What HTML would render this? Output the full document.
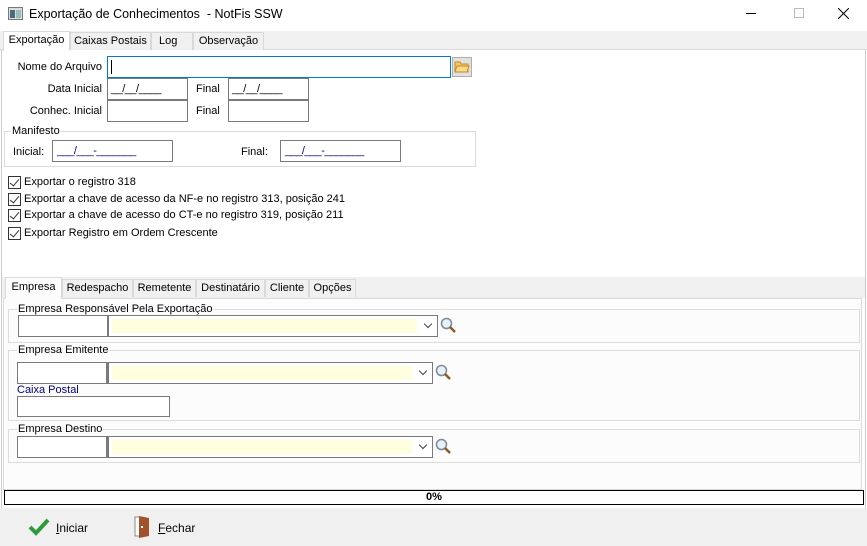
<!DOCTYPE html><html><head><meta charset="utf-8"><style>
*{margin:0;padding:0;box-sizing:border-box}
body{width:867px;height:546px;background:#fff;font:11px "Liberation Sans",sans-serif;color:#000;position:relative;overflow:hidden;white-space:nowrap}
.a{position:absolute}
.r{position:absolute;text-align:right}
.in{position:absolute;border:1px solid #7a7a7a;background:#fff}
.tab{position:absolute;height:18px;border:1px solid #d9d9d9;border-bottom:none;background:#f0f0f0;text-align:center;line-height:17px}
.grp{position:absolute;border:1px solid #dcdcdc}
.lg{position:absolute;background:#fcfcfc;padding:0 1px;top:-8px;left:6px;line-height:14px}
.cb{position:absolute;left:8px;width:13px;height:13px;border:1px solid #333;background:#fff}
.cb:after{content:"";position:absolute;left:3px;top:0px;width:4px;height:8px;border:solid #333;border-width:0 1.5px 1.5px 0;transform:rotate(40deg)}
.ct{position:absolute;left:24px}
.mask{color:#000080;position:absolute;left:4px;top:4px;letter-spacing:-0.5px}
.dm{position:absolute;left:3px;top:4px;letter-spacing:-0.5px}
.combo{position:absolute;border:1px solid #7a7a7a;border-left:2px solid #7a7a7a;background:#fff}
.combo i{position:absolute;left:3px;top:3px;bottom:3px;right:20px;background:#ffffe0}
.combo b{position:absolute;right:6px;top:5px;width:6px;height:6px;border:solid #444;border-width:0 1px 1px 0;transform:rotate(45deg)}
</style></head><body>
<div class="a" style="left:0;top:0;width:867px;height:30px;background:#fff"></div>
<svg class="a" style="left:8px;top:7px" width="15" height="13"><rect x="0.5" y="0.5" width="14" height="12" fill="#ddd" stroke="#777"/><rect x="2" y="3" width="5" height="8" fill="#4a6b7c"/><rect x="8" y="3" width="5" height="8" fill="#9bb"/></svg>
<div class="a" style="left:29px;top:7px;font-size:12.5px">Exportação de Conhecimentos&nbsp; - NotFis SSW</div>
<div class="a" style="left:746px;top:13px;width:10px;height:1px;background:#000"></div>
<div class="a" style="left:794px;top:8px;width:10px;height:10px;border:1px solid #bbb"></div>
<svg class="a" style="left:838px;top:8px" width="11" height="11"><path d="M0 0L11 11M11 0L0 11" stroke="#000" stroke-width="1"/></svg>
<div class="a" style="left:0;top:31px;width:867px;height:19px;background:#f0f0f0;border-bottom:1px solid #d9d9d9"></div>
<div class="a" style="left:1px;top:50px;width:1px;height:460px;background:#ccc"></div>
<div class="a" style="left:865px;top:50px;width:1px;height:460px;background:#ccc"></div>
<div class="tab" style="left:3px;top:31px;width:67px;height:20px;background:#fff;line-height:17px">Exportação</div>
<div class="tab" style="left:70px;top:32px;width:81px">Caixas Postais</div>
<div class="tab" style="left:151px;top:32px;width:42px;text-align:left;padding-left:7px">Log</div>
<div class="tab" style="left:193px;top:32px;width:71px">Observação</div>
<div class="r" style="left:0;width:102px;top:61px">Nome do Arquivo</div>
<div class="in" style="left:107px;top:56px;width:344px;height:22px;border-color:#0078d7"><div class="a" style="left:3px;top:3px;width:1px;height:14px;background:#000"></div></div>
<div class="a" style="left:452px;top:57px;width:20px;height:20px;background:#e1e1e1;border:1px solid #adadad"></div>
<svg class="a" style="left:454px;top:61px" width="16" height="12"><path d="M1 1h5l1 2h7v8H1z" fill="#f7c866" stroke="#c48a22"/><path d="M3 5h12l-2 6H1z" fill="#fbd98a" stroke="#c48a22"/></svg>
<div class="r" style="left:0;width:102px;top:83px">Data Inicial</div>
<div class="in" style="left:107px;top:78px;width:81px;height:22px"><span class="dm">__/__/____</span></div>
<div class="a" style="left:196px;top:83px">Final</div>
<div class="in" style="left:228px;top:78px;width:81px;height:22px"><span class="dm">__/__/____</span></div>
<div class="r" style="left:0;width:102px;top:105px">Conhec. Inicial</div>
<div class="in" style="left:107px;top:100px;width:81px;height:22px"></div>
<div class="a" style="left:196px;top:105px">Final</div>
<div class="in" style="left:228px;top:100px;width:81px;height:22px"></div>
<div class="grp" style="left:4px;top:131px;width:472px;height:36px"><span class="lg" style="background:#fff;left:6px">Manifesto</span></div>
<div class="a" style="left:13px;top:146px">Inicial:</div>
<div class="in" style="left:52px;top:140px;width:121px;height:22px"><span class="mask">___/___-_______</span></div>
<div class="a" style="left:241px;top:146px">Final:</div>
<div class="in" style="left:280px;top:140px;width:121px;height:22px"><span class="mask">___/___-_______</span></div>
<div class="cb" style="top:176px"></div><div class="ct" style="top:176px">Exportar o registro 318</div>
<div class="cb" style="top:193px"></div><div class="ct" style="top:193px">Exportar a chave de acesso da NF-e no registro 313, posição 241</div>
<div class="cb" style="top:209px"></div><div class="ct" style="top:209px">Exportar a chave de acesso do CT-e no registro 319, posição 211</div>
<div class="cb" style="top:227px"></div><div class="ct" style="top:227px">Exportar Registro em Ordem Crescente</div>
<div class="a" style="left:2px;top:277px;width:863px;height:21px;background:#f0f0f0"></div>
<div class="a" style="left:3px;top:298px;width:859px;height:192px;background:#fcfcfc;border:1px solid #dadada"></div>
<div class="tab" style="left:5px;top:277px;width:57px;height:22px;background:#fcfcfc;line-height:18px">Empresa</div>
<div class="tab" style="left:62px;top:279px;width:71px">Redespacho</div>
<div class="tab" style="left:133px;top:279px;width:63px">Remetente</div>
<div class="tab" style="left:196px;top:279px;width:69px">Destinatário</div>
<div class="tab" style="left:265px;top:279px;width:44px">Cliente</div>
<div class="tab" style="left:309px;top:279px;width:47px">Opções</div>
<div class="grp" style="left:8px;top:309px;width:852px;height:34px"><span class="lg" style="left:8px">Empresa Responsável Pela Exportação</span></div>
<div class="in" style="left:18px;top:315px;width:90px;height:22px"></div>
<div class="combo" style="left:107px;top:315px;width:331px;height:22px"><i></i><b></b></div>
<svg class="a" style="left:440px;top:317px" width="17" height="17"><circle cx="6.5" cy="6.5" r="5" fill="#e8f0f8" stroke="#7a8a99" stroke-width="1.5"/><path d="M10 10l5 5" stroke="#8a5a20" stroke-width="2.5"/></svg>
<div class="grp" style="left:8px;top:350px;width:852px;height:71px"><span class="lg" style="left:8px">Empresa Emitente</span></div>
<div class="in" style="left:17px;top:362px;width:90px;height:22px"></div>
<div class="combo" style="left:107px;top:362px;width:326px;height:22px"><i></i><b></b></div>
<svg class="a" style="left:435px;top:364px" width="17" height="17"><circle cx="6.5" cy="6.5" r="5" fill="#e8f0f8" stroke="#7a8a99" stroke-width="1.5"/><path d="M10 10l5 5" stroke="#8a5a20" stroke-width="2.5"/></svg>
<div class="a" style="left:17px;top:384px;color:#000080">Caixa Postal</div>
<div class="in" style="left:17px;top:396px;width:153px;height:21px"></div>
<div class="grp" style="left:8px;top:429px;width:852px;height:34px"><span class="lg" style="left:8px">Empresa Destino</span></div>
<div class="in" style="left:17px;top:436px;width:90px;height:22px"></div>
<div class="combo" style="left:107px;top:436px;width:326px;height:22px"><i></i><b></b></div>
<svg class="a" style="left:435px;top:438px" width="17" height="17"><circle cx="6.5" cy="6.5" r="5" fill="#e8f0f8" stroke="#7a8a99" stroke-width="1.5"/><path d="M10 10l5 5" stroke="#8a5a20" stroke-width="2.5"/></svg>
<div class="a" style="left:4px;top:490px;width:860px;height:15px;border:1px solid #000;background:#fff;text-align:center;font-weight:bold;font-size:11px;line-height:13px">0%</div>
<div class="a" style="left:0;top:508px;width:867px;height:38px;background:#f0f0f0"></div>
<svg class="a" style="left:28px;top:518px" width="22" height="18"><path d="M2 9l6 6L20 2" fill="none" stroke="#2e9a3a" stroke-width="4"/></svg>
<div class="a" style="left:56px;top:521px;font-size:12px"><u>I</u>niciar</div>
<svg class="a" style="left:134px;top:515px" width="18" height="24"><rect x="1" y="2" width="5" height="19" fill="#fff" stroke="#888"/><path d="M5 1l10 2v18l-10 2z" fill="#a0522d"/><rect x="7" y="11" width="2" height="2" fill="#fff"/></svg>
<div class="a" style="left:158px;top:521px;font-size:12px"><u>F</u>echar</div>
</body></html>
